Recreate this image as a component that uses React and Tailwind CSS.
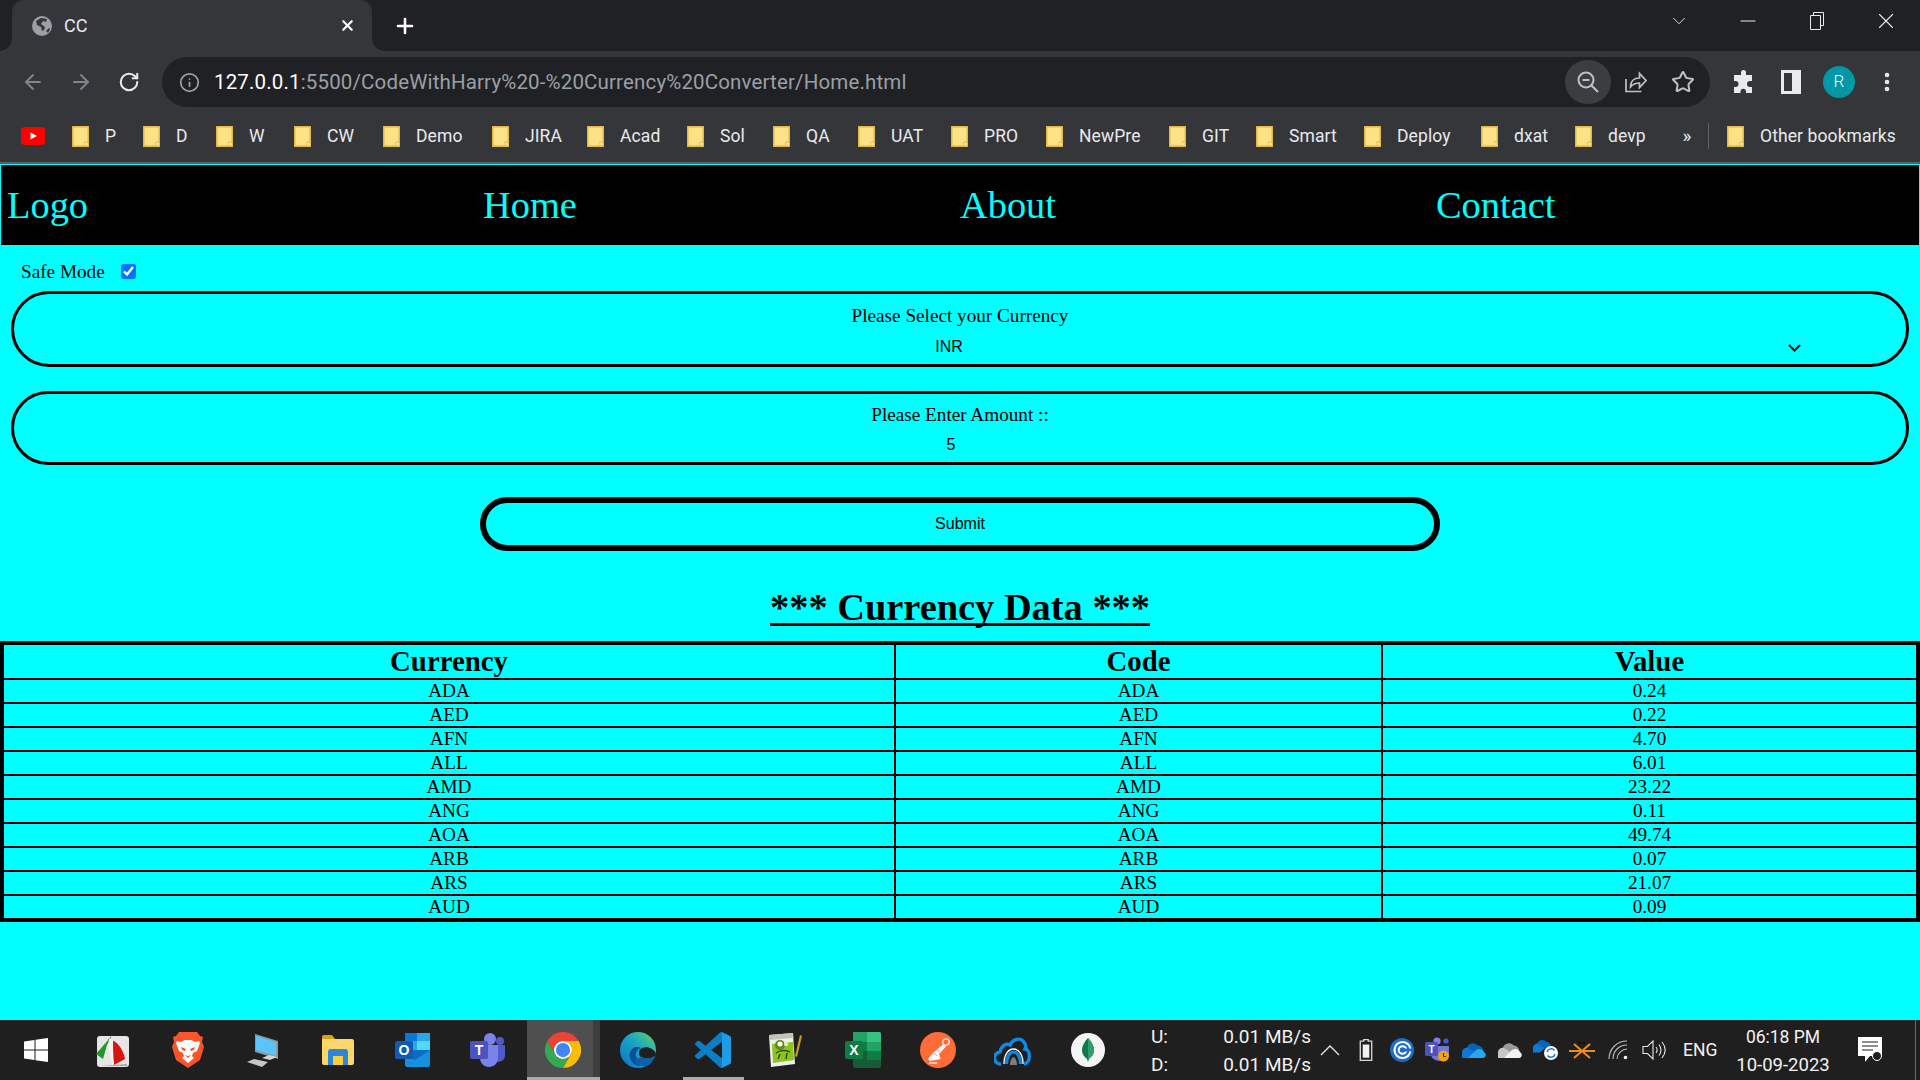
import { ArrowLeft, ArrowRight, RotateCw, Info, Star, MoreVertical, Plus, X, ChevronDown, Minus } from 'lucide-react';

const bookmarks = [
  { label: 'P', w: 'w-[71px]' },
  { label: 'D', w: 'w-[73px]' },
  { label: 'W', w: 'w-[78px]' },
  { label: 'CW', w: 'w-[89px]' },
  { label: 'Demo', w: 'w-[109px]' },
  { label: 'JIRA', w: 'w-[95px]' },
  { label: 'Acad', w: 'w-[100px]' },
  { label: 'Sol', w: 'w-[86px]' },
  { label: 'QA', w: 'w-[85px]' },
  { label: 'UAT', w: 'w-[93px]' },
  { label: 'PRO', w: 'w-[95px]' },
  { label: 'NewPre', w: 'w-[123px]' },
  { label: 'GIT', w: 'w-[87px]' },
  { label: 'Smart', w: 'w-[108px]' },
  { label: 'Deploy', w: 'w-[117px]' },
  { label: 'dxat', w: 'w-[94px]' },
  { label: 'devp', w: 'w-[107px]' },
];

const rates = [
  ['ADA', '0.24'],
  ['AED', '0.22'],
  ['AFN', '4.70'],
  ['ALL', '6.01'],
  ['AMD', '23.22'],
  ['ANG', '0.11'],
  ['AOA', '49.74'],
  ['ARB', '0.07'],
  ['ARS', '21.07'],
  ['AUD', '0.09'],
];

function Folder() {
  return (
    <svg width="17" height="21" viewBox="0 0 17 21" className="shrink-0">
      <path d="M0 0h17v21H0z" fill="#e3b743" />
      <path d="M1.5 1.5h14v14h-3v4h-11z" fill="#fde287" />
      <path d="M13 16.5h3v3h-3z" fill="#fde287" />
    </svg>
  );
}

function Bookmark({ label, w }) {
  return (
    <div className={`${w} flex items-center gap-4 shrink-0`}>
      <Folder />
      <span>{label}</span>
    </div>
  );
}

function TabBar() {
  return (
    <div className="h-[51px] bg-[#202124] flex items-end shrink-0">
      <div className="relative ml-3 w-[360px] h-[51px] bg-[#35363a] rounded-t-[12px] flex items-center text-[#e8eaed] text-[18px]">
        <span className="absolute -left-3 bottom-0 w-3 h-3 bg-[radial-gradient(circle_at_0_0,#202124_11.5px,#35363a_12px)]" />
        <span className="absolute -right-3 bottom-0 w-3 h-3 bg-[radial-gradient(circle_at_100%_0,#202124_11.5px,#35363a_12px)]" />
        <svg width="20" height="20" viewBox="0 0 20 20" className="ml-5 shrink-0">
          <circle cx="10" cy="10" r="10" fill="#9aa0a6" />
          <path d="M9 2 4 5l1 4 4 2 1 4 2-1 1-3-4-3 2-3 3 1 1-3zM14 15l3-3 1 1-2 4z" fill="#35363a" />
        </svg>
        <span className="ml-3">CC</span>
        <X size={17} strokeWidth={3} className="ml-auto mr-4 text-white" />
      </div>
      <div className="ml-2.5 w-[46px] h-[51px] flex items-center justify-center text-white">
        <Plus size={24} strokeWidth={2.6} />
      </div>
      <div className="ml-auto self-start flex h-[42px] items-center text-[#e8eaed]">
        <div className="w-[69px] flex justify-center">
          <ChevronDown size={22} strokeWidth={1} />
        </div>
        <div className="w-[69px] flex justify-center">
          <Minus size={24} strokeWidth={1} />
        </div>
        <div className="w-[69px] flex justify-center">
          <svg width="16" height="18" viewBox="0 0 16 18" fill="none" stroke="currentColor">
            <path d="M1.5 3.5h10v14h-10z" />
            <path d="M4.500 3.500v-3h10v13h-3" />
          </svg>
        </div>
        <div className="w-[69px] flex justify-center">
          <X size={26} strokeWidth={1} />
        </div>
      </div>
    </div>
  );
}

function Toolbar() {
  return (
    <div className="h-[57px] bg-[#35363a] flex items-center pl-[9px] pt-[5px] shrink-0">
      <div className="w-12 flex justify-center text-[#80868b]">
        <ArrowLeft size={24} strokeWidth={1.8} />
      </div>
      <div className="w-12 flex justify-center text-[#80868b]">
        <ArrowRight size={24} strokeWidth={1.8} />
      </div>
      <div className="w-12 flex justify-center text-[#e8eaed]">
        <RotateCw size={22} strokeWidth={2.2} />
      </div>
      <div className="ml-[9px] w-[1548px] h-[50px] rounded-full bg-[#202124] flex items-center pl-[17px] pr-[3px] text-[#9aa0a6]">
        <Info size={21} strokeWidth={2} />
        <span className="ml-[14px] text-[20.5px] tracking-[0.15px]">
          <span className="text-white">127.0.0.1</span>:5500/CodeWithHarry%20-%20Currency%20Converter/Home.html
        </span>
        <div className="ml-auto w-[46px] h-[44px] rounded-full bg-[#3c3d41] flex items-center justify-center">
          <svg width="24" height="24" viewBox="0 0 24 24" fill="none" stroke="#bdc1c6" strokeWidth="2">
            <circle cx="10" cy="10" r="7.5" />
            <path d="M6.5 10h7M15.5 15.5 22 22" />
          </svg>
        </div>
        <div className="w-12 flex justify-center">
          <svg width="24" height="24" viewBox="0 0 24 24" fill="none" stroke="#bdc1c6" strokeWidth="1.7">
            <path d="M3 9v12.5h15.5" />
            <path d="M7.5 17c0-6 3.5-9 9-9V3.5L23 10.5l-6.500 7V13c-4 0-6.500 1-9 4z" />
          </svg>
        </div>
        <div className="w-12 flex justify-center">
          <Star size={24} strokeWidth={2} className="text-[#bdc1c6]" />
        </div>
      </div>
      <div className="ml-[9px] w-12 flex justify-center">
        <svg width="24" height="24" viewBox="0 0 24 24" fill="#e8eaed">
          <path d="M10 2.500a2.500 2.500 0 0 1 5 0V5h6v6h-2a3 3 0 0 0 0 6h2v6h-6v-2a2.800 2.800 0 0 0-5.500 0v2H3v-6h1.500a3 3 0 0 0 0-6H3V5h7z" />
        </svg>
      </div>
      <div className="w-12 flex justify-center">
        <svg width="20" height="24" viewBox="0 0 20 24">
          <path d="M0 0h20v24H0z" fill="#e8eaed" />
          <path d="M3 3h8v18H3z" fill="#35363a" />
        </svg>
      </div>
      <div className="w-12 flex justify-center">
        <div className="w-8 h-8 rounded-full bg-[#0097a7] text-white text-[17px] font-light flex items-center justify-center">R</div>
      </div>
      <div className="w-12 flex justify-center text-[#e8eaed]">
        <MoreVertical size={24} strokeWidth={2.6} />
      </div>
    </div>
  );
}

function BookmarkBar() {
  return (
    <div className="h-[54px] bg-[#35363a] flex items-center pt-[2px] text-[#e8eaed] text-[17.5px] tracking-[0.1px] shrink-0">
      <div className="w-[72px] pl-[21px] shrink-0">
        <svg width="24" height="18" viewBox="0 0 24 18">
          <rect width="24" height="18" rx="4" fill="#ff0000" />
          <path d="M9.500 5.500 16 9l-6.500 3.500z" fill="#fff" />
        </svg>
      </div>
      {bookmarks.map((b) => (
        <Bookmark key={b.label} label={b.label} w={b.w} />
      ))}
      <span className="w-[26px] pr-4 text-[19px] text-center shrink-0">»</span>
      <span className="w-px h-[26px] bg-[#5f6368] shrink-0" />
      <div className="ml-[18px] flex items-center gap-4 shrink-0">
        <Folder />
        <span>Other bookmarks</span>
      </div>
    </div>
  );
}

function CurrencyPage() {
  return (
    <div className="flex-1 bg-[#00ffff] text-black font-['Liberation_Serif',serif] min-h-0">
      <nav className="h-[81px] bg-black border border-b-0 border-[#00ffff] grid grid-cols-[476px_477px_476px_1fr] pl-[6px] pt-[2px] items-center text-[#00ffff] text-[38.4px]">
        <div>Logo</div>
        <div>Home</div>
        <div>About</div>
        <div>Contact</div>
      </nav>
      <div className="h-[46px] pl-[21px] pt-[9px] flex items-center text-[19.2px]">
        <span>Safe Mode</span>
        <input type="checkbox" defaultChecked className="ml-4 w-[15px] h-[15px] -mt-[2px]" />
      </div>
      <div className="mx-[11px] h-[76px] border-[3px] border-black rounded-[45px] flex flex-col items-center pt-[11px]">
        <label className="text-[19.2px] leading-[22px]">Please Select your Currency</label>
        <div className="relative mt-[8px] w-[1694px] mr-[9px]">
          <select defaultValue="INR" className="block w-full h-[24px] appearance-none bg-transparent border-0 pr-[13px] text-center text-[16px] font-['Liberation_Sans',sans-serif]">
            <option value="INR">INR</option>
          </select>
          <svg width="13" height="8" viewBox="0 0 13 8" fill="none" stroke="#000" strokeWidth="2" className="absolute right-[2px] top-[9px]">
            <path d="M1 1l5.500 5.500L12 1" />
          </svg>
        </div>
      </div>
      <div className="mx-[11px] mt-[24px] h-[74px] border-[3px] border-black rounded-[45px] flex flex-col items-center pt-[10px]">
        <label className="text-[19.2px] leading-[22px]">Please Enter Amount ::</label>
        <input type="number" defaultValue={5} className="mt-[7px] w-[90%] h-[24px] pr-[3px] bg-transparent text-center text-[16px] font-['Liberation_Sans',sans-serif]" />
      </div>
      <button className="block mx-auto mt-[32px] w-[960px] h-[54px] border-[6px] border-black rounded-[27px] text-[16px] font-['Liberation_Sans',sans-serif]">
        Submit
      </button>
      <div className="h-[90px] flex items-center justify-center pt-[24px]">
        <h1 className="text-[38.4px] font-bold underline decoration-[3px] underline-offset-[3px] [text-decoration-skip-ink:none]">*** Currency Data ***</h1>
      </div>
      <table className="w-full table-fixed border-collapse border-[4px] border-black text-center text-[19.2px] leading-[22px]">
        <colgroup>
          <col className="w-[893px]" />
          <col className="w-[487px]" />
          <col />
        </colgroup>
        <thead>
          <tr className="text-[28.8px] leading-[33px]">
            <th className="border-2 border-black font-bold">Currency</th>
            <th className="border-2 border-black font-bold">Code</th>
            <th className="border-2 border-black font-bold">Value</th>
          </tr>
        </thead>
        <tbody>
          {rates.map(([code, value]) => (
            <tr key={code}>
              <td className="border-2 border-black">{code}</td>
              <td className="border-2 border-black">{code}</td>
              <td className="border-2 border-black">{value}</td>
            </tr>
          ))}
        </tbody>
      </table>
    </div>
  );
}

/* taskbar icons */
const WindowsIcon = () => (
  <svg width="24" height="24" viewBox="0 0 24 24" fill="#fff" className="mr-[3px]">
    <path d="M0 3.400 10.500 2v9.500H0zM11.500 1.800 24 0v11.500H11.500zM0 12.500h10.500V22L0 20.600zM11.500 12.500H24V24l-12.500-1.800z" />
  </svg>
);

const FastStoneIcon = () => (
  <svg width="34" height="34" viewBox="0 0 34 34">
    <rect x="1" y="3" width="32" height="31" rx="3" fill="#e6e6e6" />
    <path d="M31 33H4l27-2z" fill="#a8a8a8" />
    <path d="M12 6c8 1 15 9 17 20l-11 6z" fill="#d8160f" />
    <path d="M17 0 13 6 0 21l7 5 4-14z" fill="#1d9a2b" />
    <path d="M13 6c-1 6 0 14 3 26l2-1c-1-9-1-18-1-25z" fill="#f2f2f2" />
  </svg>
);

const BraveIcon = () => (
  <svg width="32" height="36" viewBox="0 0 32 36">
    <path d="M7 0h18l3 4 3 1-1 5 2 5-4 13-9 6-3 2-3-2-9-6-4-13 2-5-1-5 3-1z" fill="#fb542b" />
    <path d="M5 9l4 1 4-2h6l4 2 4-1 1 2-3 8-4 2-1 3 2 2-6 5-6-5 2-2-1-3-4-2-3-8z" fill="#fff" />
    <path d="M9 15l5 2-1 2-3-1zM23 15l-5 2 1 2 3-1zM13 23l3 1 3-1-3 3z" fill="#fb542b" />
  </svg>
);

const PcIcon = () => (
  <svg width="34" height="34" viewBox="0 0 34 34">
    <path d="M9 1l23 7v18l-23-7z" fill="#8c99a3" />
    <path d="M10 3l20 6v14L10 17z" fill="#5bc4f9" />
    <path d="M16 25l7-3 8 2-7 3z" fill="#d5d5d5" />
    <path d="M1 29l7-3 14 3-6 5z" fill="#c6c6c6" />
  </svg>
);

const ExplorerIcon = () => (
  <svg width="32" height="30" viewBox="0 0 32 30">
    <path d="M0 2a2 2 0 0 1 2-2h8l3 4h-13z" fill="#d9a21b" />
    <path d="M0 4h30a2 2 0 0 1 2 2v22a2 2 0 0 1-2 2H2a2 2 0 0 1-2-2z" fill="#fcd56b" />
    <path d="M6 30V17a3 3 0 0 1 3-3h14a3 3 0 0 1 3 3v13h-5v-9H11v9z" fill="#2f86d6" />
    <path d="M11 21h10v9H11z" fill="#ffce3d" />
  </svg>
);

const OutlookIcon = () => (
  <svg width="36" height="34" viewBox="0 0 36 34">
    <path d="M10 0h23a2 2 0 0 1 2 2v16H10z" fill="#0a78d4" />
    <path d="M22 0h13v8H22zM10 8h12v9H10z" fill="#28a8ea" />
    <path d="M22 8h13v9H22z" fill="#50d9ff" />
    <path d="M10 17h25v15a2 2 0 0 1-2 2H12a2 2 0 0 1-2-2z" fill="#1490df" />
    <path d="M35 17 20 27l-10-6v-4z" fill="#0a6cbd" />
    <rect x="0" y="8" width="18" height="18" rx="2" fill="#0f5cb0" />
    <text x="9" y="22" textAnchor="middle" fontSize="14" fontWeight="700" fill="#fff" fontFamily="Liberation Sans, sans-serif">O</text>
  </svg>
);

const TeamsIcon = () => (
  <svg width="36" height="34" viewBox="0 0 36 34">
    <circle cx="20" cy="6" r="6" fill="#7b83eb" />
    <circle cx="30" cy="8" r="4" fill="#5059c9" />
    <path d="M25 12h10v10c0 5-4 7-7 7l-3-2z" fill="#5059c9" />
    <path d="M10 12h18v13c0 5-4 9-9 9s-9-4-9-9z" fill="#7b83eb" />
    <rect x="0" y="8" width="18" height="18" rx="2" fill="#4b53bc" />
    <text x="9" y="22" textAnchor="middle" fontSize="14" fontWeight="700" fill="#fff" fontFamily="Liberation Sans, sans-serif">T</text>
  </svg>
);

const ChromeIcon = () => (
  <svg width="36" height="36" viewBox="0 0 48 48">
    <path d="M24 12h20.800A24 24 0 0 0 3.200 12l10.400 18A12 12 0 0 1 24 12z" fill="#ea4335" />
    <path d="M13.600 30 3.200 12A24 24 0 0 0 24 48l10.400-18a12 12 0 0 1-20.800 0z" fill="#34a853" />
    <path d="M24 12h20.800A24 24 0 0 1 24 48l10.400-18A12 12 0 0 0 24 12z" fill="#fbbc04" />
    <circle cx="24" cy="24" r="12" fill="#fff" />
    <circle cx="24" cy="24" r="9.500" fill="#4285f4" />
  </svg>
);

const EdgeIcon = () => (
  <svg width="36" height="36" viewBox="0 0 36 36">
    <defs>
      <linearGradient id="edgeOuter" x1="0" y1="1" x2="1" y2="0">
        <stop offset="0" stopColor="#0b74c8" />
        <stop offset="0.55" stopColor="#1aa4c4" />
        <stop offset="1" stopColor="#5ed66a" />
      </linearGradient>
    </defs>
    <circle cx="18" cy="18" r="18" fill="url(#edgeOuter)" />
    <path d="M36 22c-2-6-9-8-14-6-4 2-4 7-1 9 4 2 10 2 14-1z" fill="#1f1f1f" />
    <path d="M14 32c-5-4-6-11-2-15 3-3 7-2 9-1-3 1-6 4-5 8 1 5 6 7 11 6-3 4-9 5-13 2z" fill="#0b4f9c" />
    <path d="M21 25c4 2 10 2 14-1-1 4-4 8-8 10-5 1-9-1-11-4-1-1-1-3 0-4 1 1 3 0 5-1z" fill="#0e5eab" />
  </svg>
);

const VsCodeIcon = () => (
  <svg width="36" height="36" viewBox="0 0 24 24">
    <path d="M23.150 2.587 18.210.21a1.494 1.494 0 0 0-1.705.29l-9.460 8.630-4.120-3.128a.999.999 0 0 0-1.276.057L.327 7.261A1 1 0 0 0 .326 8.740L3.899 12 .326 15.260a1 1 0 0 0 .001 1.479L1.650 17.940a.999.999 0 0 0 1.276.057l4.120-3.128 9.460 8.630a1.492 1.492 0 0 0 1.704.29l4.942-2.377A1.500 1.500 0 0 0 24 20.060V3.939a1.500 1.500 0 0 0-.85-1.352zm-5.146 14.861L10.826 12l7.178-5.448v10.896z" fill="#0c7ec6" />
    <path d="M18 .1 23.150 2.587A1.500 1.500 0 0 1 24 3.939v16.120a1.500 1.500 0 0 1-.85 1.352L18 23.900z" fill="#1f9ce6" />
  </svg>
);

const NotepadIcon = () => (
  <svg width="34" height="36" viewBox="0 0 34 36" className="mr-[5px]">
    <path d="M1 3 25 1l2 31-24 3z" fill="#eef1ea" />
    <path d="M1 3 25 1l.3 5-24 2z" fill="#bfc3b8" />
    <path d="M4 12 25 10l1 18-21 3z" fill="#8ec21e" />
    <circle cx="12" cy="13" r="5" fill="#5d8a12" />
    <circle cx="12" cy="12" r="2.600" fill="#fff" />
    <circle cx="18" cy="12" r="2.200" fill="#dfe9c8" />
    <path d="M8 21c4-3 9-3 14-1M10 27l2-5M18 27l1-6" stroke="#2f4f10" strokeWidth="1.500" fill="none" />
    <path d="M27 24 32 3l2 1-5 21z" fill="#c79a1c" />
  </svg>
);

const ExcelIcon = () => (
  <svg width="36" height="36" viewBox="0 0 36 36">
    <path d="M8 0h26a2 2 0 0 1 2 2v8H8z" fill="#21a366" />
    <path d="M22 0h12a2 2 0 0 1 2 2v8H22z" fill="#33c481" />
    <path d="M8 10h14v9H8z" fill="#107c41" />
    <path d="M22 10h14v9H22z" fill="#21a366" />
    <path d="M8 19h14v9H8z" fill="#185c37" />
    <path d="M22 19h14v9H22z" fill="#107c41" />
    <path d="M8 28h28v6a2 2 0 0 1-2 2H10a2 2 0 0 1-2-2z" fill="#185c37" />
    <rect x="0" y="9" width="18" height="18" rx="2" fill="#107c41" />
    <text x="9" y="23" textAnchor="middle" fontSize="14" fontWeight="700" fill="#fff" fontFamily="Liberation Sans, sans-serif">X</text>
  </svg>
);

const PostmanIcon = () => (
  <svg width="36" height="36" viewBox="0 0 36 36">
    <circle cx="18" cy="18" r="18" fill="#ff6c37" />
    <circle cx="26" cy="10" r="3.200" fill="none" stroke="#fff" strokeWidth="1.200" />
    <path d="M23 12.500 26 14.500 19 22 20.500 27 10 29 8 27 13 21z" fill="#fff" />
    <path d="M16 17l4 3M13.500 21l4 3" stroke="#ff6c37" strokeWidth="0.800" />
    <path d="M9 31h8" stroke="#fff" strokeWidth="1.200" />
  </svg>
);

const CloudIcon = () => (
  <svg width="38" height="32" viewBox="0 0 38 32">
    <path d="M7 30a6 6 0 0 1-1-12c1-6 6-9 10-7 2-5 9-8 13-4 3 3 3 6 2 8 6 1 6 14-1 15" fill="none" stroke="#0e8be0" strokeWidth="3.400" />
    <path d="M10 30c0-9 4-15 9.500-15S29 21 29 30" fill="none" stroke="#f4f4f4" strokeWidth="1.400" />
    <path d="M12.500 30c0-7 3-12 7-12s7 5 7 12" fill="none" stroke="#0e8be0" strokeWidth="3.200" />
    <path d="M16 31c0-3 1-7 3.500-8 2.500 1 3.500 5 3.500 8z" fill="#7d7d7d" />
  </svg>
);

const MongoIcon = () => (
  <svg width="34" height="34" viewBox="0 0 34 34">
    <circle cx="17" cy="17" r="17" fill="#f5f5f5" />
    <path d="M17 5c3 3 6 8 6 12 0 5-3 7-5 9l-1 3-1-3c-2-2-5-4-5-9 0-4 3-9 6-12z" fill="#13784d" />
    <path d="M17 5c3 3 6 8 6 12 0 5-3 7-6 9z" fill="#2f9e6e" />
  </svg>
);

const taskbarIcons = [
  WindowsIcon, FastStoneIcon, BraveIcon, PcIcon, ExplorerIcon, OutlookIcon, TeamsIcon,
  ChromeIcon, EdgeIcon, VsCodeIcon, NotepadIcon, ExcelIcon, PostmanIcon, CloudIcon, MongoIcon,
];

const OneDrive = ({ back = '#0364b8', mid = '#0f78d4', front = '#28a8ea' }) => (
  <svg width="24" height="16" viewBox="0 0 24 16">
    <path d="M6 12a6 6 0 0 1 10-8.500A5 5 0 0 1 21 9z" fill={back} />
    <path d="M1 16a3 3 0 0 1-1-5.500A4.500 4.500 0 0 1 6 6l8 5-6 5z" fill={mid} />
    <path d="M6 16l8-8c3-2 7-1 8 2 3 2 2 6-1 6z" fill={front} />
  </svg>
);

const tray = [
  <svg width="20" height="12" viewBox="0 0 20 12" fill="none" stroke="#e8e8e8" strokeWidth="1.300"><path d="M1 11 10 2l9 9" /></svg>,
  <svg width="14" height="22" viewBox="0 0 12 20" fill="none"><path d="M4 .5h4V2h3.200v17.500H.8V2H4z" stroke="#d8d8d8" strokeWidth="1.200" /><path d="M3 5h6v12H3z" fill="#f2f2f2" /></svg>,
  <svg width="24" height="24" viewBox="0 0 24 24"><circle cx="12" cy="12" r="12" fill="#1a6ec9" /><circle cx="12.500" cy="12" r="8" fill="none" stroke="#fff" strokeWidth="2.200" /><circle cx="12.500" cy="12" r="3.800" fill="none" stroke="#fff" strokeWidth="2" /><path d="M13 10.500h11v3H13z" fill="#1a6ec9" /></svg>,
  <svg width="26" height="26" viewBox="0 0 26 26"><circle cx="12" cy="4" r="3.600" fill="#7b83eb" /><circle cx="21" cy="4" r="2.600" fill="#5059c9" /><path d="M6 9h18v8c0 4-4 7-9 7s-9-3-9-7z" fill="#6f77d8" /><rect x="0" y="5" width="13" height="14" rx="1.500" fill="#4b53bc" /><text x="6.500" y="16" textAnchor="middle" fontSize="10" fontWeight="700" fill="#fff" fontFamily="Liberation Sans, sans-serif">T</text><circle cx="18.500" cy="19" r="5.500" fill="#f0a30a" /><path d="M18.500 16v3.500h2.500" stroke="#3b2a00" strokeWidth="1" fill="none" /></svg>,
  <OneDrive />,
  <OneDrive back="#9a9a9a" mid="#c6c6c6" front="#f2f2f2" />,
  <svg width="26" height="22" viewBox="0 0 26 22"><g transform="scale(0.85)"><path d="M6 12a6 6 0 0 1 10-8.500A5 5 0 0 1 21 9z" fill="#0364b8" /><path d="M1 16a3 3 0 0 1-1-5.500A4.500 4.500 0 0 1 6 6l8 5-6 5z" fill="#0f78d4" /></g><circle cx="18" cy="14" r="7" fill="#fff" /><path d="M14 13a4.200 4.200 0 0 1 7.500-1.500M22 15a4.200 4.200 0 0 1-7.500 1.500" fill="none" stroke="#0f78d4" strokeWidth="1.400" /></svg>,
  <svg width="26" height="18" viewBox="0 0 26 18" stroke="#f08c1c" strokeWidth="2" fill="none"><path d="M0 10h26M5 3l8 7 8-7M5 17l8-7 8 7" /><circle cx="11" cy="2" r="1.300" fill="#111" stroke="none" /><circle cx="15" cy="2" r="1.300" fill="#111" stroke="none" /></svg>,
  <svg width="20" height="20" viewBox="0 0 20 20" fill="none" stroke="#bdbdbd" strokeWidth="1.100"><path d="M1 19C1 9 9 1 19 1" /><path d="M5 19c0-8 6-14 14-14" /><path d="M9 19c0-5 5-10 10-10" /><circle cx="17.500" cy="17.500" r="1.800" fill="#f0f0f0" stroke="none" /></svg>,
  <svg width="24" height="20" viewBox="0 0 24 20" fill="none" stroke="#e8e8e8" strokeWidth="1.100"><path d="M1 6.500h4.500L11 1v18l-5.500-5.500H1z" /><path d="M14 7c1.500 2 1.500 4 0 6" /><path d="M17 4.500c2.500 3.500 2.500 7.500 0 11" /><path d="M20 2c4 5 4 11 0 16" /></svg>,
];

function Taskbar() {
  return (
    <div className="h-[60px] bg-[#1f1f1f] flex items-stretch shrink-0 text-[#f2f2f2] text-[19px] font-['Roboto',sans-serif]">
      {taskbarIcons.map((Icon, i) => (
        <div key={i} className="relative w-[75px] flex items-center justify-center shrink-0">
          {i === 7 && <span className="absolute left-[2px] right-0 top-0 bottom-0 bg-[#4f4f4f]" />}
          {i === 7 && <span className="absolute right-0 top-0 bottom-0 w-[7px] bg-[#3d3d3d]" />}
          {i === 7 && <span className="absolute left-[2px] right-0 bottom-0 h-[3px] bg-[#ababab]" />}
          {i === 9 && <span className="absolute left-[8px] right-[6px] bottom-0 h-[3px] bg-[#ababab]" />}
          <div className="relative flex items-center justify-center">
            <Icon />
          </div>
        </div>
      ))}
      <div className="w-[187px] shrink-0 pl-[26px] pr-px pt-px flex flex-col justify-center leading-[28px]">
        <div className="flex justify-between"><span>U:</span><span>0.01 MB/s</span></div>
        <div className="flex justify-between"><span>D:</span><span>0.01 MB/s</span></div>
      </div>
      {tray.map((icon, i) => (
        <div key={i} className="w-9 flex items-center justify-center shrink-0">{icon}</div>
      ))}
      <div className="w-12 pl-[11px] shrink-0 flex items-center text-[17.5px]">ENG</div>
      <div className="w-[126px] shrink-0 pt-px flex flex-col items-center justify-center leading-[28px] text-[18.5px]">
        <span className="text-[17.5px]">06:18 PM</span>
        <span>10-09-2023</span>
      </div>
      <div className="w-12 shrink-0 flex items-center justify-center">
        <svg width="24" height="26" viewBox="0 0 24 26">
          <path d="M0 0h24v19H12l-5 6v-6H0z" fill="#fff" />
          <path d="M4 5h16M4 9h16M4 13h11" stroke="#1f1f1f" strokeWidth="1.200" />
          <circle cx="19" cy="19" r="4.500" fill="#1f1f1f" stroke="#fff" strokeWidth="1" />
        </svg>
      </div>
      <div className="flex-1 border-r border-[#6a6a6a] mr-1" />
    </div>
  );
}

export default function App() {
  return (
    <div className="w-[1920px] h-[1080px] overflow-hidden flex flex-col font-['Roboto',sans-serif]">
      <TabBar />
      <Toolbar />
      <BookmarkBar />
      <div className="h-0.5 bg-[#5f6065] shrink-0" />
      <CurrencyPage />
      <Taskbar />
    </div>
  );
}
